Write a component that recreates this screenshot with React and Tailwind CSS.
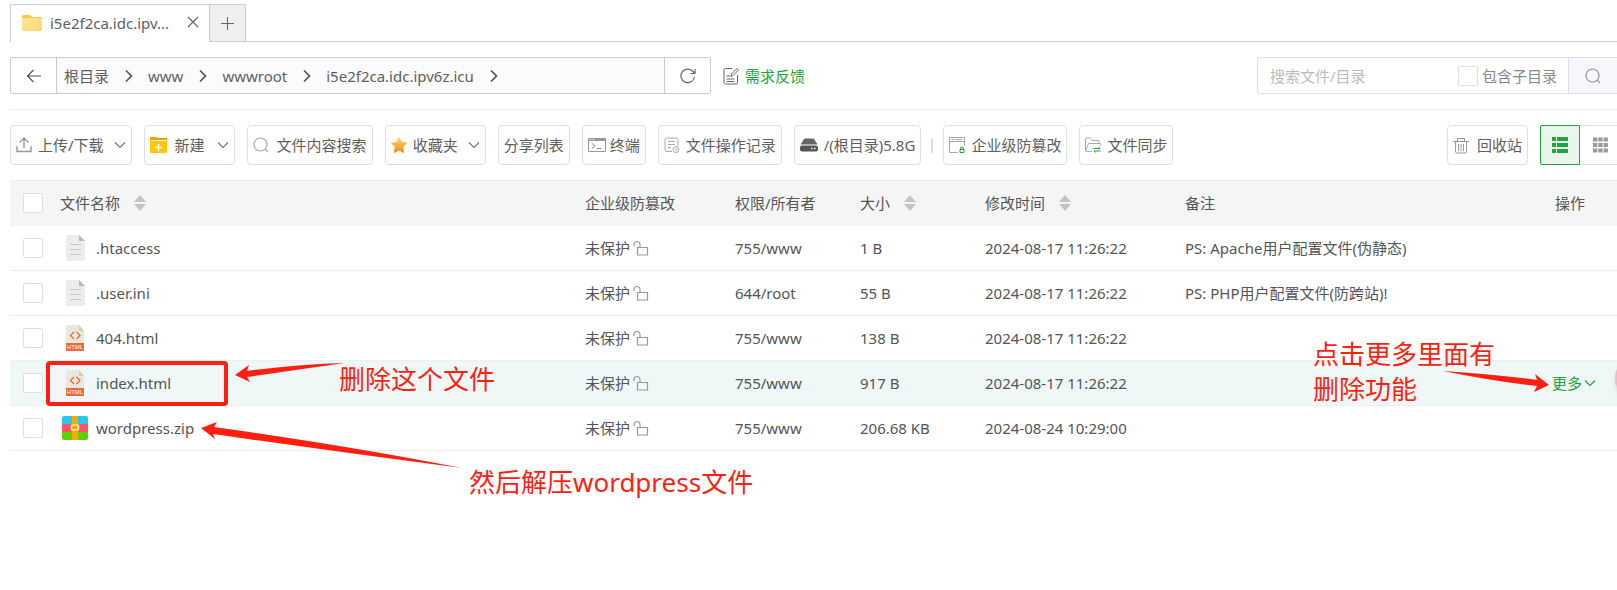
import React, { useState } from 'react';

const font = "font-['Noto_Sans','Noto_Sans_CJK_SC',sans-serif]";

const files = [
    { name: '.htaccess', type: 'text', owner: '755/www', size: '1 B', time: '2024-08-17 11:26:22', remark: 'PS: Apache用户配置文件(伪静态)' },
    { name: '.user.ini', type: 'text', owner: '644/root', size: '55 B', time: '2024-08-17 11:26:22', remark: 'PS: PHP用户配置文件(防跨站)!' },
    { name: '404.html', type: 'html', owner: '755/www', size: '138 B', time: '2024-08-17 11:26:22', remark: '' },
    { name: 'index.html', type: 'html', owner: '755/www', size: '917 B', time: '2024-08-17 11:26:22', remark: '', active: true },
    { name: 'wordpress.zip', type: 'zip', owner: '755/www', size: '206.68 KB', time: '2024-08-24 10:29:00', remark: '' },
];

const crumbs = ['根目录', 'www', 'wwwroot', 'i5e2f2ca.idc.ipv6z.icu'];

const Svg = ({ w = 16, h = 16, children, className = '' }) => (
    <svg width={w} height={h} viewBox={`0 0 ${w} ${h}`} fill="none" className={`shrink-0 ${className}`} aria-hidden="true">
        {children}
    </svg>
);

const Chevron = ({ className = 'text-[#777]' }) => (
    <Svg w={12} h={8} className={className}>
        <path d="M1 1.5 6 6.5 11 1.5" stroke="currentColor" strokeWidth="1.2" />
    </Svg>
);

const Magnifier = ({ className }) => (
    <Svg className={className}>
        <circle cx="7.5" cy="7.5" r="6.5" stroke="currentColor" strokeWidth="1.2" />
        <path d="m12 12 3 3" stroke="currentColor" strokeWidth="1.2" />
    </Svg>
);

const FolderIcon = () => (
    <Svg w={20} h={16}>
        <defs>
            <linearGradient id="folder" x1="0" y1="0" x2="1" y2="1">
                <stop stopColor="#ffe7a0" />
                <stop offset="1" stopColor="#ffd56b" />
            </linearGradient>
        </defs>
        <path d="M0 1.5Q0 0 1.5 0H8l2 2h9q1 0 1 1v4H0Z" fill="#fbc843" />
        <rect y="3" width="20" height="13" rx="1" fill="url(#folder)" />
    </Svg>
);

const UploadIcon = () => (
    <Svg className="text-[#999]">
        <path d="M8 11V1.5M3.5 5.5 8 1l4.5 4.5M1 9v5.5h14V9" stroke="currentColor" strokeWidth="1.4" />
    </Svg>
);

const NewIcon = () => (
    <Svg w={17}>
        <path d="M0 1q0-1 1-1h5l2 1h9v4H0Z" fill="#ff9c00" />
        <path d="M0 3h17v12q0 1-1 1H1q-1 0-1-1Z" fill="#ffc70a" />
        <path d="M1 3.5h15" stroke="#fff" />
        <path d="M8.5 7v7M5 10.5h7" stroke="#fff" strokeWidth="1.4" />
    </Svg>
);

const StarIcon = () => (
    <Svg w={16} h={17}>
        <defs>
            <linearGradient id="star" x1="0" y1="0" x2="0" y2="1">
                <stop stopColor="#ffd76a" />
                <stop offset="1" stopColor="#f58a1f" />
            </linearGradient>
        </defs>
        <path d="m8 .5 2.3 4.9 5.3.7-3.9 3.7 1 5.7L8 13l-4.7 2.5 1-5.7L.4 6.1l5.3-.7Z" fill="url(#star)" stroke="url(#star)" strokeLinejoin="round" />
    </Svg>
);

const TerminalIcon = () => (
    <Svg w={18}>
        <path d="M.5 1.5h17v13H.5Z" stroke="#999" />
        <path d="M0 1h18v3H0Z" fill="#999" />
        <path d="M1.5 2.5h1M3.5 2.5h1M5.5 2.5h1" stroke="#fff" />
        <path d="m4 6.5 3 2.5-3 2.5M8.5 11.5H13" stroke="#888" />
    </Svg>
);

const RecordIcon = () => (
    <Svg>
        <path d="M8 14.5H3q-2 0-2-2V2.5Q1 1 2.5 1h10Q14 1 14 2.5V9M4 4.5h7M4 7.5h7M4 10.5h3" stroke="#aaa" />
        <circle cx="12" cy="12.5" r="3" stroke="#aaa" fill="#fff" />
        <path d="M12 11v2h1.5" stroke="#aaa" />
    </Svg>
);

const DiskIcon = () => (
    <Svg w={18} h={14}>
        <path d="M4.5 1h9L17 6.5H1Z" fill="#666" stroke="#666" strokeLinejoin="round" />
        <path d="M0 7h18" stroke="#fff" />
        <rect y="7.5" width="18" height="6" rx="2" fill="#555" />
        <path d="M11 10.5h1.5M14 10.5h1.5" stroke="#fff" strokeWidth="1.5" />
    </Svg>
);

const ShieldPageIcon = () => (
    <Svg>
        <path d="M9 15.5H.5V.5h15V9M2.5 2.5h3M7 2.5h6M.5 4.5h15" stroke="#aaa" />
        <path d="M11.5 12.5V11q0-1 1.5-1t1.5 1v1.5M11 12.5h4v3h-4Z" stroke="#20a53a" />
    </Svg>
);

const SyncIcon = () => (
    <Svg>
        <path d="M7 14.5H1.5q-1 0-1-1V2q0-1 1-1h4L7 3.5h6q1 0 1 1V6M.5 14l3-7.500h12L15 9" stroke="#aaa" />
        <path d="M8.5 11.5H15L13.500 10M15.500 14H9l1.500 1.500" stroke="#20a53a" />
    </Svg>
);

const TrashIcon = () => (
    <Svg h={17}>
        <path d="M0 4.5h16M4.5 4V1.500h7V4M2.500 5v9.500Q2.500 16 4 16h8q1.500 0 1.500-1.500V5M5.500 7v7M8 7v7M10.500 7v7" stroke="#999" />
    </Svg>
);

const FeedbackIcon = () => (
    <Svg h={18}>
        <path d="M9 1.5H2.5Q1 1.5 1 3v12.5Q1 17 2.5 17H13q1.5 0 1.5-1.5V8M3.5 9H7M3.5 12h8M3.5 14.5h8M8 9.5 8.5 7 14 1.5 15.5 3 10 8.5Z" stroke="#666" />
    </Svg>
);

const SortIcon = () => (
    <Svg w={12} h={18} className="ml-[14px]">
        <path d="M6 1 12 8H0ZM6 17 0 10h12Z" fill="#c4c4c4" />
    </Svg>
);

const LockIcon = () => (
    <Svg h={18} className="text-[#999]">
        <path d="M1 7V5.500a3 3 0 0 1 6 0V8M4.500 8.500h10V16h-10Z" stroke="currentColor" strokeWidth="1.200" />
    </Svg>
);

const FileIcon = ({ type }) => {
    switch (type) {
        case 'html':
            return (
                <Svg w={18} h={26}>
                    <path d="M0 1q0-1 1-1h12l5 6v20H0Z" fill="#e9e8de" />
                    <path d="M13 0v6h5Z" fill="#cfcdbb" />
                    <path d="M8 7 4.500 10.500 8 14M10.500 7l3.500 3.500-3.500 3.500" stroke="#ee6a35" strokeWidth="1.300" />
                    <path d="M0 18h18v8H0Z" fill="#ee6a35" />
                    <text x="9" y="24" textAnchor="middle" fontSize="6" fontFamily="Liberation Sans" fill="#fff">HTML</text>
                </Svg>
            );
        case 'zip':
            return (
                <Svg w={26} h={24}>
                    <path d="M0 8V2q0-2 2-2h22q2 0 2 2v6Z" fill="#24c8f0" />
                    <path d="M0 8h26v8H0Z" fill="#ff5562" />
                    <path d="M0 16h26v6q0 2-2 2H2q-2 0-2-2Z" fill="#5fd000" />
                    <path d="M10 0h6v24h-6Z" fill="#ffa800" />
                    <rect x="9.5" y="9" width="7" height="5" rx="1" fill="#ffa800" stroke="#fff0c0" strokeWidth="1.5" />
                </Svg>
            );
        default:
            return (
                <Svg w={19} h={26}>
                    <path d="M0 1q0-1 1-1h12l6 6v19q0 1-1 1H1q-1 0-1-1Z" fill="#ececec" />
                    <path d="M13 0v6h6Z" fill="#b9b9b9" />
                    <path d="M4 9.5h11M4 14.5h11M4 19.5h11" stroke="#c9c9c9" />
                </Svg>
            );
    }
};

const Check = ({ label }) => (
    <input
        type="checkbox"
        aria-label={label}
        className="block size-5 shrink-0 appearance-none rounded-xs border border-[#dcdfe6] bg-white checked:bg-[#20a53a]"
    />
);

const ToolButton = ({ icon, children, arrow, className = 'gap-[6px]' }) => (
    <button type="button" className={`flex h-10 shrink-0 items-center rounded border border-[#dcdfe6] bg-white px-[5px] ${className}`}>
        {icon}
        <span>{children}</span>
        {arrow && <Chevron className="ml-1 text-[#777]" />}
    </button>
);

const Tabs = () => (
    <div className="flex h-[38px] items-stretch">
        <div className="flex w-[199px] items-center rounded-tl-xs border-t border-l border-[#ccc] pb-[2px] pl-[11px]">
            <FolderIcon />
            <span className="ml-2 flex-1 truncate">i5e2f2ca.idc.ipv...</span>
            <button type="button" aria-label="Close tab" className="mr-2 p-[2px] pb-1">
                <Svg w={12} h={12}>
                    <path d="m1 1 10 10M11 1 1 11" stroke="#666" strokeWidth="1.2" />
                </Svg>
            </button>
        </div>
        <button type="button" aria-label="New tab" className="flex w-[37px] items-center justify-center border border-[#ccc] bg-[#efefef]">
            <Svg w={13} h={13}>
                <path d="M6.5 0v13M0 6.5h13" stroke="#666" />
            </Svg>
        </button>
        <div className="flex-1 border-b border-[#ccc]" />
    </div>
);

const PathBar = () => (
    <div className="mt-[15px] flex h-[37px] items-stretch">
        <nav className="flex w-[701px] rounded-xs border border-[#ccc]">
            <button type="button" aria-label="Back" className="flex w-[46px] items-center justify-center border-r border-[#ccc]">
                <Svg>
                    <path d="M15 8H1.5M7.5 2 1.5 8l6 6" stroke="#555" strokeWidth="1.2" />
                </Svg>
            </button>
            <div className="flex flex-1 items-center bg-[#fbfbfb]">
                {crumbs.map((crumb) => (
                    <React.Fragment key={crumb}>
                        <a href="#" className="px-[7px]">{crumb}</a>
                        <Svg w={8} h={14} className="mr-2 ml-[9px]">
                            <path d="m1 1.5 5.5 5.5L1 12.5" stroke="#555" strokeWidth="1.7" />
                        </Svg>
                    </React.Fragment>
                ))}
            </div>
            <button type="button" aria-label="Refresh" className="flex w-[46px] items-center justify-center border-l border-[#ccc]">
                <Svg>
                    <path d="M14.5 9A6.8 6.8 0 1 1 13 3.5L15 5.5M15 1v4.5h-4.5" stroke="#666" strokeWidth="1.2" />
                </Svg>
            </button>
        </nav>
        <a href="#" className="ml-3 flex items-center gap-[6px] text-[#20a53a]">
            <FeedbackIcon />
            需求反馈
        </a>
        <form className="ml-auto flex w-[360px] rounded-l border border-r-0 border-[#dcdfe6]">
            <input aria-label="搜索文件/目录" placeholder="搜索文件/目录" className="min-w-0 flex-1 pl-3 outline-none placeholder:text-[#bbb]" />
            <label className="flex items-center gap-1 pr-[11px] text-[#888]">
                <Check label="包含子目录" />
                包含子目录
            </label>
            <button type="button" aria-label="Search" className="flex w-[49px] items-center justify-center border-l border-[#dcdfe6] bg-[#f5f7fa] text-[#909399]">
                <Magnifier />
            </button>
        </form>
    </div>
);

const Toolbar = () => (
    <div className="mt-[15px] flex items-center border-t border-[#ebeef5] py-[15px]">
        <div className="flex items-center gap-3">
            <ToolButton icon={<UploadIcon />} arrow>上传/下载</ToolButton>
            <ToolButton icon={<NewIcon />} arrow className="gap-2">新建</ToolButton>
            <ToolButton icon={<Magnifier className="text-[#aaa]" />} className="gap-2">文件内容搜索</ToolButton>
            <ToolButton icon={<StarIcon />} arrow>收藏夹</ToolButton>
            <ToolButton>分享列表</ToolButton>
            <ToolButton icon={<TerminalIcon />} className="gap-1">终端</ToolButton>
            <ToolButton icon={<RecordIcon />}>文件操作记录</ToolButton>
            <ToolButton icon={<DiskIcon />}>/(根目录)5.8G</ToolButton>
            <span className="-mx-[2px] h-[15px] w-[2px] bg-[#dcdfe6]" />
            <ToolButton icon={<ShieldPageIcon />}>企业级防篡改</ToolButton>
            <ToolButton icon={<SyncIcon />}>文件同步</ToolButton>
        </div>
        <div className="ml-auto flex items-center">
            <ToolButton icon={<TrashIcon />} className="mr-3 gap-2">回收站</ToolButton>
            <button type="button" aria-label="List view" className="flex h-10 w-10 items-center justify-center rounded-l-xs border border-[#20a53a] bg-[#e9f6eb]">
                <Svg>
                    <path d="M0 2h4M5 2h11M0 8h4M5 8h11M0 14h4M5 14h11" stroke="#20a53a" strokeWidth="4" />
                </Svg>
            </button>
            <button type="button" aria-label="Grid view" className="flex h-10 w-[37px] items-center justify-center border-y border-[#dcdfe6] pl-1">
                <Svg>
                    <path d="M0 2.5h15M0 8h15M0 13.5h15" stroke="#999" strokeWidth="4" strokeDasharray="4.3 1" />
                </Svg>
            </button>
        </div>
    </div>
);

const FileTable = () => (
    <table className="w-full table-fixed border-t border-[#ebeef5] text-left text-[#555]">
        <colgroup>
            <col className="w-[50px]" />
            <col />
            <col className="w-[150px]" />
            <col className="w-[125px]" />
            <col className="w-[125px]" />
            <col className="w-[200px]" />
            <col className="w-[330px]" />
            <col className="w-[102px]" />
        </colgroup>
        <thead className="bg-[#f5f5f5]">
            <tr className="h-[45px] [&>th]:font-normal">
                <th className="pl-[13px]"><Check label="全选" /></th>
                <th><span className="flex items-center">文件名称<SortIcon /></span></th>
                <th>企业级防篡改</th>
                <th>权限/所有者</th>
                <th><span className="flex items-center">大小<SortIcon /></span></th>
                <th><span className="flex items-center">修改时间<SortIcon /></span></th>
                <th>备注</th>
                <th className="pr-8 text-right">操作</th>
            </tr>
        </thead>
        <tbody>
            {files.map((file) => (
                <tr key={file.name} className={`h-[45px] border-b border-[#ebeef5] ${file.active ? 'bg-[#eff8f7]' : ''}`}>
                    <td className="pl-[13px]"><Check label={file.name} /></td>
                    <td>
                        <span className="relative flex items-center">
                            <span className="flex w-9 justify-center pr-[6px]"><FileIcon type={file.type} /></span>
                            {file.name}
                            {file.active && <span className="absolute -left-[14px] -top-[9px] h-[45px] w-[182px] rounded-sm border-4 border-[#ff1f10]" />}
                        </span>
                    </td>
                    <td><span className="flex items-center gap-[3px]">未保护<LockIcon /></span></td>
                    <td>{file.owner}</td>
                    <td>{file.size}</td>
                    <td>{file.time}</td>
                    <td>{file.remark}</td>
                    <td className="pr-[21px]">
                        {file.active && (
                            <button type="button" className="ml-auto flex items-center gap-[2px] text-[#20a53a]">
                                更多<Chevron className="text-[#20a53a]" />
                            </button>
                        )}
                    </td>
                </tr>
            ))}
        </tbody>
    </table>
);

// Red notes drawn over the file list
const Notes = () => (
    <div className="pointer-events-none text-[26px] leading-[35px] text-[#ff1f10]">
        <svg width="470" height="120" viewBox="0 0 470 120" className="absolute left-0 top-[355px]" aria-hidden="true">
            <path d="M235 20 249 10 247 16 Q300 9 345 8 Q295 15 247 22 L250 27Z" fill="#ff1f10" />
            <path d="M201 73 217 67 214 72 Q350 91 462 113 Q345 98 213 79 L215 84Z" fill="#ff1f10" />
        </svg>
        <svg width="110" height="30" viewBox="0 0 110 30" className="absolute right-[65px] top-[366px]" aria-hidden="true">
            <path d="M1 5 Q50 8 95 14 L93 8 107 19 92 26 95 20 Q50 15 1 5Z" fill="#ff1f10" />
        </svg>
        <p className="absolute left-[339px] top-[362px]">删除这个文件</p>
        <p className="absolute left-[469px] top-[465px]">然后解压wordpress文件</p>
        <p className="absolute right-[122px] top-[337px]">点击更多里面有<br />删除功能</p>
    </div>
);

const App = () => {
    const [showNotes] = useState(true);

    return (
        <div className={`relative min-h-screen overflow-hidden bg-white pl-[10px] pt-1 text-[15px] leading-6 text-[#606060] ${font}`}>
            <Tabs />
            <PathBar />
            <Toolbar />
            <FileTable />
            {showNotes && <Notes />}
            <span className="absolute -right-[38px] top-[358px] size-10 rounded-full bg-[#f9b4cc] shadow-md" />
        </div>
    );
};

export default App;
